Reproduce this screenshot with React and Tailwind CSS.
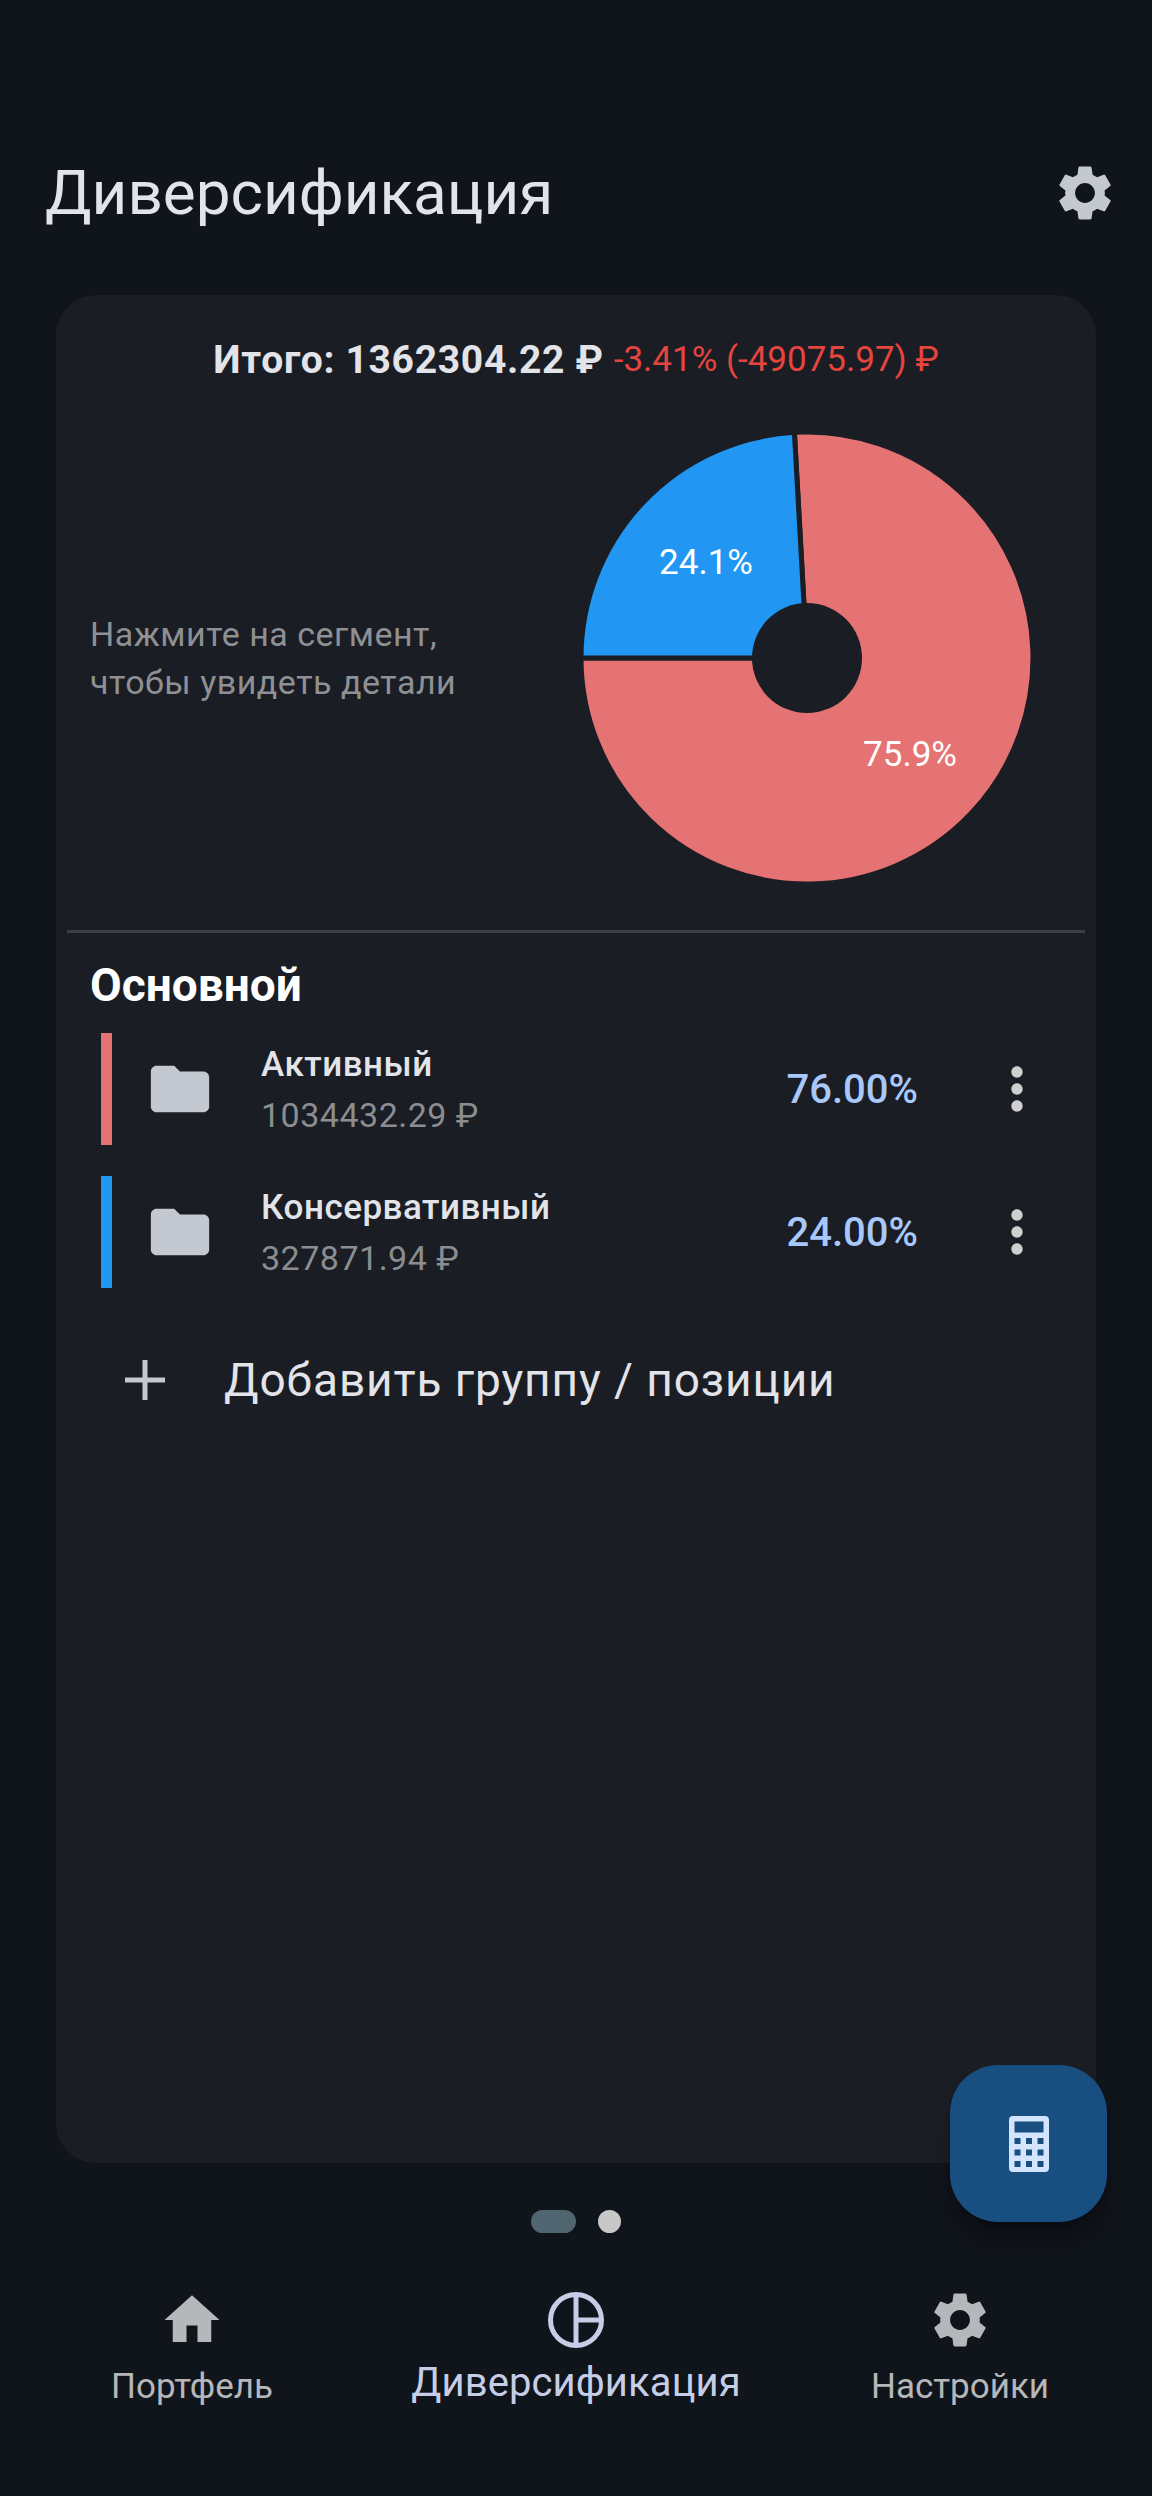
import React from "react";
import { MdSettings, MdHome, MdFolder, MdMoreVert } from "react-icons/md";

const CX = 226;
const CY = 226;
const R = 226;

function point(deg, r = R) {
  const rad = ((deg - 90) * Math.PI) / 180;
  return [CX + r * Math.cos(rad), CY + r * Math.sin(rad)];
}

function slice(from, to) {
  const [x1, y1] = point(from);
  const [x2, y2] = point(to);
  const large = to - from > 180 ? 1 : 0;
  return `M${CX} ${CY} L${x1} ${y1} A${R} ${R} 0 ${large} 1 ${x2} ${y2} Z`;
}

function PieChart() {
  return (
    <div className="relative w-[452px] h-[452px] shrink-0">
      <svg width="452" height="452" viewBox="0 0 452 452">
        <path d={slice(-3.2, 270)} fill="#e57373" stroke="#1a1d23" strokeWidth="5" />
        <path d={slice(270, 356.8)} fill="#2196f3" stroke="#1a1d23" strokeWidth="5" />
        <circle cx={CX} cy={CY} r="55" fill="#1a1d23" />
      </svg>
      <span className="absolute left-[65px] top-[111px] w-[120px] text-center text-[35px] leading-[40px] text-white">24.1%</span>
      <span className="absolute left-[269px] top-[303px] w-[120px] text-center text-[35px] leading-[40px] text-white">75.9%</span>
    </div>
  );
}

function Row({ color, name, sum, percent }) {
  return (
    <div className="flex items-center h-[112px] pl-[45px] pr-[45px]">
      <div className="w-[11px] h-full" style={{ backgroundColor: color }} />
      <MdFolder size={70} className="ml-[33px] text-[#c4c8d0] shrink-0" />
      <div className="ml-[46px] pt-[2px] flex-1">
        <div className="text-[35px] leading-[50px] font-medium tracking-[0.5px] text-[#e2e4e9]">{name}</div>
        <div className="text-[34px] leading-[50px] tracking-[0.5px] text-[#8b8d91]">{sum}</div>
      </div>
      <div className="pt-[2px] text-[40px] font-medium text-[#a8c8fa]">{percent}</div>
      <MdMoreVert size={68} className="ml-[65px] text-[#cfcfcf] shrink-0" />
    </div>
  );
}

function PieIcon() {
  return (
    <svg width="58" height="58" viewBox="0 0 58 58" fill="none" stroke="#c5cee6" strokeWidth="5">
      <circle cx="29" cy="29" r="25.5" />
      <path d="M29 3.5V54.5M29 29H54.5" />
    </svg>
  );
}

function NavItem({ icon, label, active }) {
  return (
    <div className="flex flex-col items-center">
      <div className="h-[66px] flex items-center justify-center">{icon}</div>
      <div className={active ? "mt-[5px] text-[40px] tracking-[0.1px] leading-[50px] text-[#c5cee6]" : "mt-[9px] text-[35px] leading-[50px] text-[#b5b7ba]"}>
        {label}
      </div>
    </div>
  );
}

export default function App() {
  return (
    <div className="relative w-[1152px] h-[2496px] bg-[#10141b] overflow-hidden font-['Roboto',sans-serif]">
      <div className="flex items-center justify-between pt-[149px] pl-[45px] pr-[34px] h-[295px] pb-[58px]">
        <h1 className="text-[62px] leading-[88px] text-[#e2e4e9]">Диверсификация</h1>
        <MdSettings size={66} className="text-[#c4c8d0]" />
      </div>

      <div className="ml-[56px] w-[1040px] h-[1868px] rounded-[40px] bg-[#1a1d23] pt-[40px]">
        <div className="flex items-center justify-center gap-[10px] h-[50px]">
          <span className="text-[39px] font-bold tracking-[0.7px] text-[#e2e4e9]">Итого: 1362304.22 ₽</span>
          <span className="text-[35px] text-[#e5443f]">-3.41% (-49075.97) ₽</span>
        </div>

        <div className="flex items-center justify-between mt-[47px] pl-[34px] pr-[63px]">
          <p className="text-[34px] leading-[48px] tracking-[0.5px] text-[#8e9094]">
            Нажмите на сегмент,
            <br />
            чтобы увидеть детали
          </p>
          <PieChart />
        </div>

        <div className="mx-[11px] mt-[46px] h-[3px] bg-[#3c4046]" />

        <h2 className="mt-[24px] px-[34px] text-[46px] leading-[56px] font-bold text-white">Основной</h2>

        <div className="mt-[20px] flex flex-col gap-[31px]">
          <Row color="#e57373" name="Активный" sum="1034432.29 ₽" percent="76.00%" />
          <Row color="#2196f3" name="Консервативный" sum="327871.94 ₽" percent="24.00%" />
        </div>

        <div className="mt-[52px] h-[80px] pl-[69px] flex items-center gap-[59px]">
          <svg width="40" height="40" viewBox="0 0 40 40" stroke="#c4c8d0" strokeWidth="5">
            <path d="M20 0V40M0 20H40" />
          </svg>
          <span className="text-[46px] tracking-[0.9px] text-[#e2e4e9]">Добавить группу / позиции</span>
        </div>
      </div>

      <div className="mt-[47px] flex items-center justify-center gap-[22px]">
        <div className="w-[45px] h-[23px] rounded-full bg-[#4f6670]" />
        <div className="w-[23px] h-[23px] rounded-full bg-[#c8c8c8]" />
      </div>

      <div className="mt-[54px] grid grid-cols-3">
        <NavItem label="Портфель" icon={<MdHome size={66} className="text-[#b5b7ba]" />} />
        <NavItem active label="Диверсификация" icon={<PieIcon />} />
        <NavItem label="Настройки" icon={<MdSettings size={66} className="text-[#b5b7ba]" />} />
      </div>

      <button className="absolute left-[950px] top-[2065px] w-[157px] h-[157px] rounded-[48px] bg-[#194e80] shadow-xl shadow-black/30 flex items-center justify-center">
        <svg width="40" height="56" viewBox="0 0 40 56">
          <path
            fillRule="evenodd"
            fill="#d3e4ff"
            d="M4 0H36A4 4 0 0 1 40 4V52A4 4 0 0 1 36 56H4A4 4 0 0 1 0 52V4A4 4 0 0 1 4 0ZM5.500 5.500V16.500H34.500V5.500ZM5.500 22V28H11.500V22ZM17 22V28H23V22ZM28.500 22V28H34.500V22ZM5.500 33.500V39.500H11.500V33.500ZM17 33.500V39.500H23V33.500ZM28.500 33.500V39.500H34.500V33.500ZM5.500 45V51H11.500V45ZM17 45V51H23V45ZM28.500 45V51H34.500V45Z"
          />
        </svg>
      </button>
    </div>
  );
}
